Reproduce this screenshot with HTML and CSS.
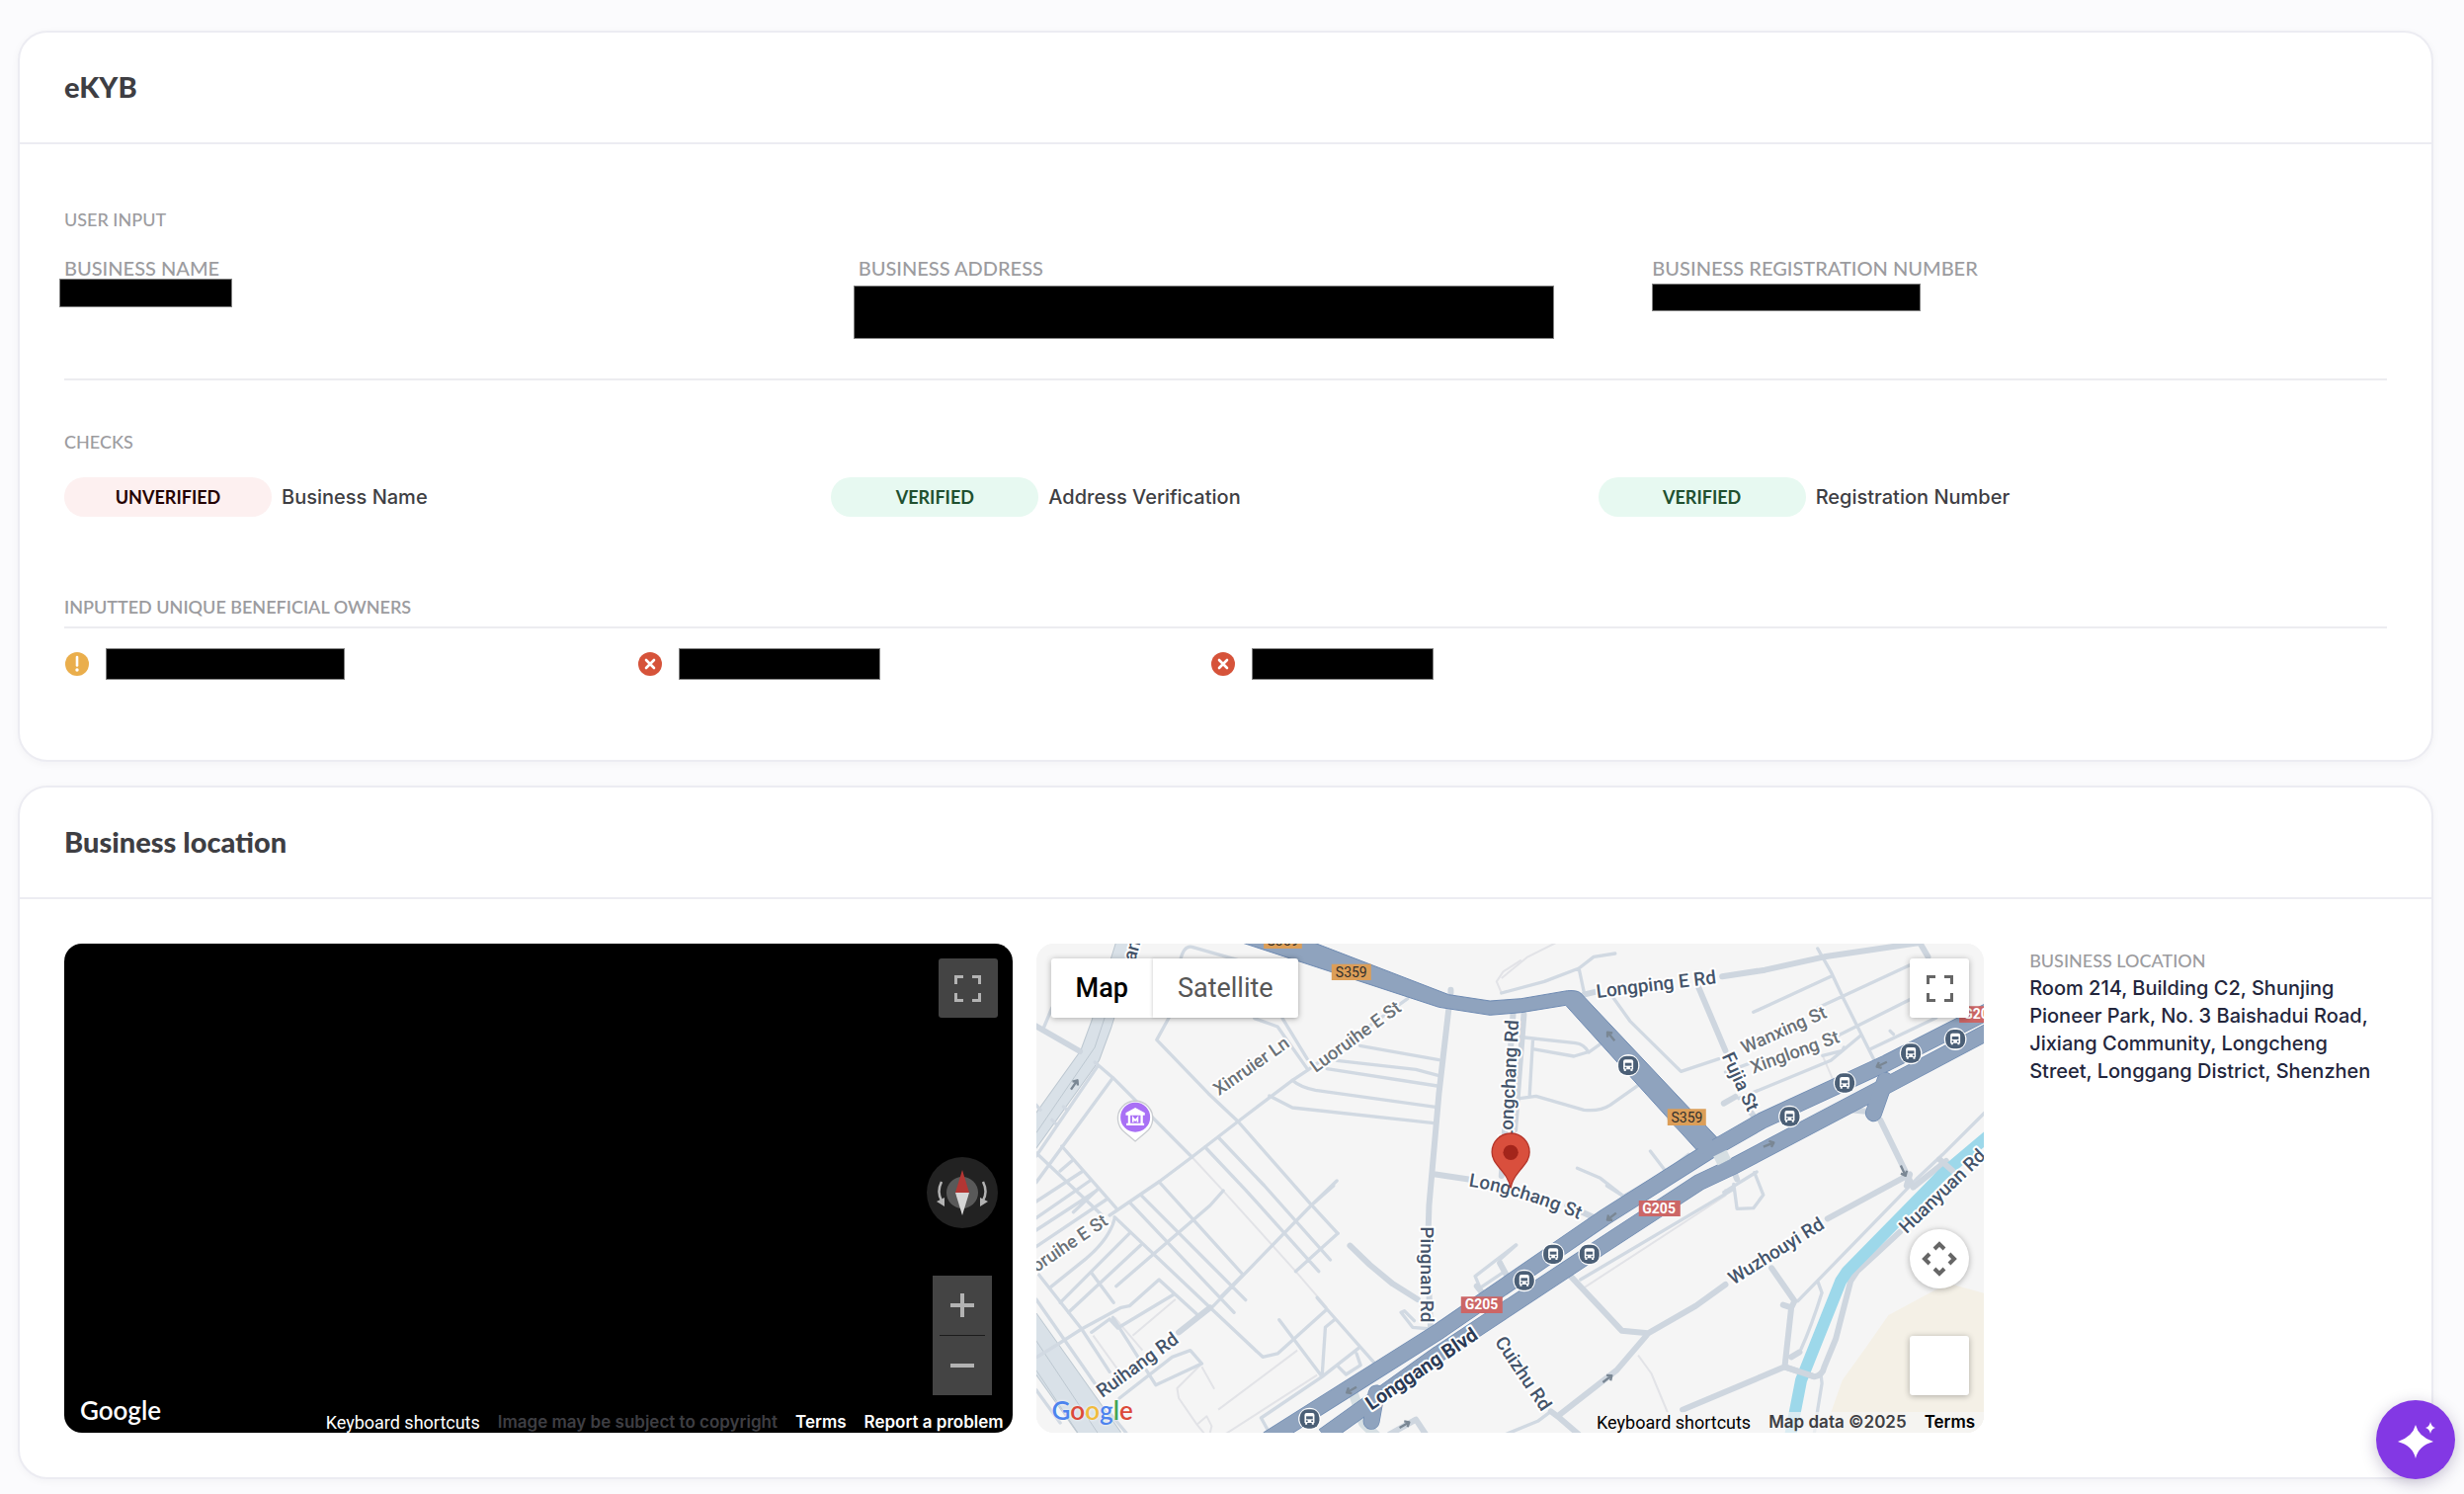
FILE: index.html
```html
<!DOCTYPE html>
<html lang="en">
<head>
<meta charset="utf-8">
<title>eKYB</title>
<link rel="stylesheet" href="styles.css">
</head>
<body>
<main class="page">
  <section class="card">
    <header class="card-header"><h2 class="card-title">eKYB</h2></header>
    <div class="card-body card-body-ekyb">
      <h3 class="label">USER INPUT</h3>
      <div class="fields">
        <div class="field">
          <span class="field-label">BUSINESS NAME</span>
          <span class="redacted redacted-name"></span>
        </div>
        <div class="field">
          <span class="field-label">BUSINESS ADDRESS</span>
          <span class="redacted redacted-address"></span>
        </div>
        <div class="field">
          <span class="field-label">BUSINESS REGISTRATION NUMBER</span>
          <span class="redacted redacted-number"></span>
        </div>
      </div>
      <h3 class="label">CHECKS</h3>
      <div class="checks">
        <div class="check"><span class="pill pill-bad">UNVERIFIED</span><span class="check-name">Business Name</span></div>
        <div class="check"><span class="pill pill-good">VERIFIED</span><span class="check-name">Address Verification</span></div>
        <div class="check"><span class="pill pill-good">VERIFIED</span><span class="check-name">Registration Number</span></div>
      </div>
      <h3 class="label label-ruled">INPUTTED UNIQUE BENEFICIAL OWNERS</h3>
      <div class="owners">
        <div class="owner">
          <svg class="status" viewBox="0 0 26 26" aria-label="Warning"><circle cx="13" cy="13" r="12" fill="#eaae4c"/><path d="M13 6v8.500" stroke="#fff" stroke-width="2.600" stroke-linecap="round"/><circle cx="13" cy="19" r="1.700" fill="#fff"/></svg>
          <span class="redacted owner-a"></span>
        </div>
        <div class="owner">
          <svg class="status" viewBox="0 0 26 26" aria-label="Failed"><circle cx="13" cy="13" r="12" fill="#d6533a"/><path d="M9 9l8 8M17 9l-8 8" stroke="#fff" stroke-width="2.600" stroke-linecap="round"/></svg>
          <span class="redacted owner-b"></span>
        </div>
        <div class="owner">
          <svg class="status" viewBox="0 0 26 26" aria-label="Failed"><circle cx="13" cy="13" r="12" fill="#d6533a"/><path d="M9 9l8 8M17 9l-8 8" stroke="#fff" stroke-width="2.600" stroke-linecap="round"/></svg>
          <span class="redacted owner-c"></span>
        </div>
      </div>
    </div>
  </section>

  <section class="card">
    <header class="card-header"><h2 class="card-title">Business location</h2></header>
    <div class="card-body location">
      <div class="view pano">
        <button class="ctl ctl-dark ctl-full" aria-label="Toggle fullscreen"><svg viewBox="0 0 27 27" width="27" height="27"><path d="M1.500 9V1.500H9M18 1.500h7.500V9M25.500 18v7.500H18M9 25.500H1.500V18" fill="none" stroke="#b3b3b3" stroke-width="3"/></svg></button>
        <button class="compass" aria-label="Rotate the view"><svg viewBox="0 0 72 72" width="72" height="72"><circle cx="36" cy="36" r="36" fill="#222"/><circle cx="36" cy="36" r="16" fill="#595959"/><path d="M36 13l7 23H29z" fill="#b33633"/><path d="M36 59l7-23H29z" fill="#d6d6d6"/><path d="M15 25q-5 10 0 19M57 25q5 10 0 19" fill="none" stroke="#b3b3b3" stroke-width="2.500"/><path d="M10 45l8-4v9zM62 45l-8-4v9z" fill="#b3b3b3"/></svg></button>
        <div class="zoom">
          <button class="ctl-zoom" aria-label="Zoom in"><svg viewBox="0 0 26 26" width="26" height="26"><path d="M13 1v24M1 13h24" stroke="#b3b3b3" stroke-width="4"/></svg></button>
          <hr class="zoom-rule">
          <button class="ctl-zoom" aria-label="Zoom out"><svg viewBox="0 0 26 26" width="26" height="26"><path d="M1 13h24" stroke="#b3b3b3" stroke-width="4"/></svg></button>
        </div>
        <span class="google google-white">Google</span>
        <div class="legal legal-pano">
          <button class="shortcut">Keyboard shortcuts</button>
          <span class="copyright">Image may be subject to copyright</span>
          <a href="#">Terms</a>
          <a href="#">Report a problem</a>
        </div>
      </div>

      <div class="view map">
        <svg class="map-art" viewBox="0 0 960 495" preserveAspectRatio="xMidYMid slice" aria-label="Street map of Longgang District">
          <defs>
            <g id="bus"><circle r="34" fill="#fff"/><rect x="-30" y="-29" width="60" height="58" rx="25" fill="#4b5f76"/><path d="M-15-12q0-6 6-6H9q6 0 6 6v24H-15z" fill="#fff"/><path d="M-10-8h20v9h-20z" fill="#4b5f76"/><circle cx="-8" cy="7" r="3" fill="#4b5f76"/><circle cx="8" cy="7" r="3" fill="#4b5f76"/><path d="M-13 10h6v7h-6zM7 10h6v7H7z" fill="#fff"/></g>
            <path id="arrow" d="M-18 0H12M4-10L16 0 4 10" fill="none" stroke="#7a8794" stroke-width="7"/>
            <path id="longchangSt" d="M1340 782Q1480 802 1700 892"/>
          </defs>
          <rect width="960" height="495" fill="#f5f5f5"/>
          <g transform="translate(-9 -15) scale(.33333)" fill="none" stroke-linejoin="round">
            <path fill="#f4f0e6" d="M2907 1107l-97-27-50 15-145 78-75 107-65 90-35 100-10 70h480z"/>
            <!-- expressway on the west side -->
            <g stroke="#bcc7d0" stroke-width="66"><path d="M315 0L225 290 190 385 0 650"/></g>
            <path d="M315 0L225 290 190 385 0 650" stroke="#d9e1e8" stroke-width="60"/>
            <path d="M245 240L205 360 27 620" stroke="#bcc7d0" stroke-width="3"/>
            <path d="M-30 1180L240 1560" stroke="#bcc7d0" stroke-width="112"/>
            <path d="M-30 1180L240 1560" stroke="#d9e1e8" stroke-width="106"/>
            <path d="M0 1210L220 1540M27 1340L160 1540" stroke="#bcc7d0" stroke-width="3"/>
            <!-- footpaths -->
            <g stroke="#e2e3e7" stroke-width="6">
              <path d="M500 693L590 790 815 1040 910 1150M450 1125L320 1235M200 1235L280 1345M265 1180L350 1280M530 1330L568 1397M530 1320L455 1395 460 1425 515 1505 545 1480 560 1510 555 1530M515 1505L560 1560M580 1460L820 1280M600 1535L880 1355"/>
              <path d="M1690 1090L2120 810 2120 790M1855 1295L1895 1350 1945 1470M2415 385L2445 455M1440 150L1520 85 1620 35"/>
              <path d="M1440 195L1425 160 1445 130 1500 95"/>
            </g>
            <!-- local streets -->
            <g stroke="#d1d9e2" stroke-width="10" stroke-linecap="round">
              <path d="M50 300L75 240M465 95Q475 50 500 55L640 95M690 272L760 297 850 425M775 272L850 395M430 270L393 337 550 500 640 585 860 835 943 925M1155 212L850 430 805 460 640 585 500 693 400 768 250 870"/>
              <path d="M1010 355L1250 398M940 400L1180 427 1250 446M910 425L1245 477M805 460Q830 482 875 490L1240 541M735 507L805 543 1235 590"/>
              <path d="M205 405L260 452 500 693M215 415L27 690M260 452L27 770M105 660L270 848M27 680L225 868M135 705L100 735M165 738L27 828M190 765L140 800 27 878M210 795L165 825 27 915M240 822L27 965M75 580L90 595M110 540L120 550M215 790L140 860M27 535L40 550"/>
              <path d="M540 663L663 793 885 1040M580 633L720 780 920 1005M400 768L655 1050M345 808L663 1127M310 830L628 1165M595 795L555 840 270 1085M940 765L862 840 560 1150M943 925L815 1040M930 780L862 840M655 1050L585 1120"/>
              <path d="M265 875L555 1150 715 1300 760 1290 910 1155 880 1120M910 1155L1060 1325M765 1187L895 1360 905 1210 935 1185M895 1360L710 1485 735 1530M895 1360L1010 1270M945 1330L968 1353 1012 1325 1000 1290M1070 1320L1165 1255"/>
              <path d="M265 880Q250 940 180 1000L68 1090M310 925L100 1135M345 960L125 1165M35 1050L165 1215M165 1215L285 1150 310 1145 400 1065 515 1170M195 1045L262 1135M165 1215L95 1260 30 1300M165 1215L250 1345M250 1185L275 1212 445 1110M195 1225L250 1185M27 1125L205 1380M27 1400L100 1500M260 1180L390 1385 530 1320 495 1280 440 1300 280 1425M250 1470L300 1530"/>
              <path d="M1360 1055L1483 960M1360 1055L1375 1090 1450 1040 1435 1005M1135 1165L1145 1160 1175 1190M1135 1165L1170 1210 1225 1215"/>
              <path d="M1440 195L1570 160 1675 120 1720 85 1785 75M1675 120L1690 190M1780 210L1830 280 1985 433 2100 395M2205 253L2440 145M2400 240L2680 110M2450 330L2700 205M2160 515L2440 400 2530 325M2120 435L2190 410M2560 365L2760 270M2400 60L2440 130 2480 215 2570 395M2415 385L2475 370 2480 360M2620 310L2630 320"/>
              <path d="M1510 330L1665 347Q1690 350 1705 375L1740 350M1535 365L1660 387 1700 375M1535 340L1525 510M1495 515L1545 508 1690 550Q1740 555 1770 535L1855 475M1670 727L1740 757 1810 812M1892 675L1940 738 1810 812M1940 738L2008 685M1680 1065L2145 790M2145 775L2155 850 2205 848 2235 808 2208 740"/>
              <path d="M2115 800L2215 738M1760 780L1815 815M1440 1000L1485 960M2915 550L2780 685 2700 760 2340 1130M2400 1070L2413 1105Q2380 1210 2350 1275M2410 1355L2413 1380 2400 1460 2390 1530M1440 1540L1550 1495 1590 1465M2890 1530L2970 1500"/>
            </g>
            <!-- collector roads -->
            <g stroke="#ced6df" stroke-width="18" stroke-linecap="round">
              <path d="M0 280L160 372M1280 240L1250 500 1220 840 1215 1000 1225 1215M1286 185v10M1235 745L1350 762M1475 260L1440 750M1508 260L1480 610M980 962L1040 1020 1110 1078 1185 1125M1365 1085L1385 1110M1435 1015L1460 1060M460 1225L555 1150"/>
              <path d="M1690 200L1730 190M2110 145L2240 125 2420 85 2710 42 2735 85M2035 170L2120 370M2195 555L2215 580M1640 840L1740 885M1650 1055L1735 1145 1805 1220 1885 1228M1885 1228L2030 1145 2120 1080M2430 880L2680 745 2670 780M2550 500L2555 530M2590 580L2690 785 2790 705M2260 1030L2330 1130 2320 1150 2300 1330 2390 1360Q2415 1355 2420 1330L2455 1245 2500 1070 2520 1040 2650 920M2295 1142L2320 1150M2300 1330L1990 1460M2320 1300L2345 1285"/>
              <path d="M1880 1235L1790 1340 1610 1480 1680 1540M1590 1465L1610 1480M2115 530L2150 510M2500 550L2555 555M1100 1535L1180 1490 1210 1535M2145 735L2155 760"/>
            </g>
            <!-- river -->
            <path d="M2940 610L2780 745 2490 1040 2470 1070 2350 1370 2315 1550" stroke="#9dd8ea" stroke-width="36"/>
            <path d="M2300 1330L2385 1358M2770 700L2810 735" stroke="#ced6df" stroke-width="18" stroke-linecap="round"/>
            <!-- trunk roads -->
            <path d="M990 1410L1020 1500 1060 1540" stroke="#d6dfe3" stroke-width="30"/>
            <g stroke-width="3" stroke="#6d8ab2" fill="#8fa3be">
              <path d="M640 38L860 38 1280 200 1405 219 1500 212 1640 188Q1670 186 1680 195L2100 640 2045 685 1635 232 1500 254 1405 262 1250 238z"/>
            </g>
            <g stroke="#6d8ab2" stroke-width="51">
              <path d="M2930 244L2610 407 2230 583 2075 672 1750 878 1250 1222 1000 1380 730 1550"/>
              <path d="M2930 306L2590 486 2150 718 2040 770 1740 966 1250 1290 900 1540"/>
              <path d="M2605 460L2570 560M1060 1410L1045 1495" stroke-linecap="round"/>
            </g>
            <g stroke="#8fa3be" stroke-width="47">
              <path d="M2930 244L2610 407 2230 583 2075 672 1750 878 1250 1222 1000 1380 730 1550"/>
              <path d="M2930 306L2590 486 2150 718 2040 770 1740 966 1250 1290 900 1540"/>
              <path d="M2605 460L2570 560M1060 1410L1045 1495" stroke-linecap="round"/>
              <path d="M1960 560L2070 665" stroke-width="50"/>
            </g>
            <path d="M2090 705L2130 685" stroke="#d6dfe3" stroke-width="30"/>
            <use href="#arrow" transform="translate(143 473) rotate(-55)"/>
            <use href="#arrow" transform="translate(1772 326) rotate(-130)"/>
            <use href="#arrow" transform="translate(2594 412) rotate(155)"/>
            <use href="#arrow" transform="translate(2252 655) rotate(-22)"/>
            <use href="#arrow" transform="translate(1774 874) rotate(142)"/>
            <use href="#arrow" transform="translate(2660 735) rotate(65)"/>
            <use href="#arrow" transform="translate(984 1400) rotate(150)"/>
            <use href="#arrow" transform="translate(1762 1366) rotate(-38)"/>
            <use href="#arrow" transform="translate(1146 1506) rotate(-30)"/>
          </g>
          <g transform="translate(-9 -15) scale(.33333)">
            <g class="shield">
              <path d="M718 10h116v50H718zM924 107h120v49H924zM1944 547h117v50h-117z" fill="#dc9e58"/>
              <text x="776" y="50">S359</text><text x="984" y="146">S359</text><text x="2003" y="587">S359</text>
            </g>
            <g class="shield shield-national">
              <path d="M1857 825h126v48h-126zM1317 1117h126v50h-126zM2830 235h126v50h-126z" fill="#cc6666"/>
              <text x="1918" y="864">G205</text><text x="1379" y="1156">G205</text><text x="2893" y="274">G205</text>
            </g>
            <use href="#bus" x="1825" y="415"/><use href="#bus" x="2315" y="570"/><use href="#bus" x="2482" y="468"/><use href="#bus" x="2683" y="378"/><use href="#bus" x="2818" y="335"/>
            <use href="#bus" x="1597" y="988"/><use href="#bus" x="1707" y="988"/><use href="#bus" x="1509" y="1068"/><use href="#bus" x="857" y="1488"/>
            <g class="street street-local">
              <text transform="translate(582 508) rotate(-35)">Xinruier Ln</text>
              <text transform="translate(876 438) rotate(-36)">Luoruihe E St</text>
              <text transform="translate(248 896) rotate(-34)" text-anchor="end">Luoruihe E St</text>
              <text transform="translate(2178 380) rotate(-24)">Wanxing St</text>
              <text transform="translate(2204 440) rotate(-20)">Xinglong St</text>
            </g>
            <g class="street">
              <text transform="translate(328 100) rotate(-75)">an</text>
              <text transform="translate(1492 278) rotate(-87)" text-anchor="end">Longchang Rd</text>
              <text><textPath href="#longchangSt">Longchang St</textPath></text>
              <text transform="translate(1730 210) rotate(-7)">Longping E Rd</text>
              <text transform="translate(2108 386) rotate(65)">Fujia St</text>
              <text transform="translate(1196 904) rotate(90)">Pingnan Rd</text>
              <text transform="translate(228 1425) rotate(-36)">Ruihang Rd</text>
              <text transform="translate(1418 1254) rotate(56)">Cuizhu Rd</text>
              <text transform="translate(2144 1082) rotate(-32)">Wuzhouyi Rd</text>
              <text transform="translate(2670 928) rotate(-44)">Huanyuan Rd</text>
              <text class="street-major" transform="translate(1045 1463) rotate(-34)">Longgang Blvd</text>
            </g>
            <path d="M328 645l-32-27a53 53 0 1 1 64 0z" fill="#fff" stroke="#c9ccd0" stroke-width="4"/>
            <circle cx="328" cy="572" r="45" fill="#a970f5"/>
            <path d="M328 543l29 16v7h-58v-7zM306 566h7v26h-7zM344 566h7v26h-7zM301 590h54v7h-54z" fill="#fff"/>
            <path d="M321 587v-13l7 8 7-8v13" fill="none" stroke="#fff" stroke-width="5"/>
            <path d="M1468 787c-5-30-18-40-30-56-16-20-27-32-27-53a57 57 0 0 1 114 0c0 21-11 33-27 53-12 16-25 26-30 56z" fill="#d94f3d" stroke="#b5352a" stroke-width="4"/>
            <circle cx="1468" cy="679" r="23" fill="#a3251b"/>
          </g>
        </svg>
        <div class="map-type">
          <button class="type-btn type-on">Map</button>
          <button class="type-btn">Satellite</button>
        </div>
        <button class="ctl ctl-light ctl-full" aria-label="Toggle fullscreen"><svg viewBox="0 0 27 27" width="27" height="27"><path d="M1.500 9V1.500H9M18 1.500h7.500V9M25.500 18v7.500H18M9 25.500H1.500V18" fill="none" stroke="#666" stroke-width="3"/></svg></button>
        <button class="ctl ctl-light ctl-pan" aria-label="Map camera controls"><svg viewBox="0 0 36 36" width="36" height="36"><path d="M13 8l5-5 5 5M13 28l5 5 5-5M8 13l-5 5 5 5M28 13l5 5-5 5" fill="none" stroke="#666" stroke-width="4"/></svg></button>
        <button class="ctl ctl-light ctl-pegman" aria-label="Street View"></button>
        <span class="google"><span class="g-blue">G</span><span class="g-red">o</span><span class="g-yellow">o</span><span class="g-blue">g</span><span class="g-green">l</span><span class="g-red">e</span></span>
        <div class="legal legal-map">
          <button class="shortcut">Keyboard shortcuts</button>
          <span class="copyright">Map data ©2025</span>
          <a href="#">Terms</a>
        </div>
      </div>

      <div class="address">
        <span class="label">BUSINESS LOCATION</span>
        <p class="address-text">Room 214, Building C2, Shunjing Pioneer Park, No. 3 Baishadui Road, Jixiang Community, Longcheng Street, Longgang District, Shenzhen</p>
      </div>
    </div>
  </section>
</main>
<button class="assistant" aria-label="Open assistant"><svg viewBox="0 0 40 40" width="40" height="40"><path d="M20 5q3 12 18 17-15 4-18 17-3-13-18-17Q17 17 20 5zM35 2q1 5 5 6-4 1-5 6-1-5-5-6 4-1 5-6z" fill="#fff"/></svg></button>
</body>
</html>
```
FILE: styles.css
```css
* { box-sizing: border-box; }
body {
  margin: 0;
  background: #fbfbfd;
  color: #3e3e43;
  font-family: "Lato", "Liberation Sans", sans-serif;
  font-size: 20px;
  line-height: 28px;
}
h2, h3, p { margin: 0; }
button { border: 0; padding: 0; background: none; font: inherit; cursor: pointer; }

.page { display: flex; flex-direction: column; gap: 24px; padding: 31px 31px 15px 18px; }
.card {
  background: #fff;
  border: 2px solid #ececf2;
  border-radius: 30px;
  box-shadow: 0 2px 8px rgba(30, 30, 60, .04);
}
.card-header { padding: 37px 45px 38px; border-bottom: 2px solid #ececf2; }
.card-title { font-size: 29px; line-height: 36px; font-weight: 900; }
.card-body { padding: 45px; }
.card-body-ekyb { padding: 62px 45px 81px; }

.label, .field-label { color: #9c9c9f; font-weight: 500; }
.label { display: block; font-size: 18px; line-height: 28px; }
.field-label { display: block; font-size: 20px; line-height: 28px; }

.fields {
  display: grid;
  grid-template-columns: repeat(3, 1fr);
  gap: 60px;
  align-items: start;
  margin: 21px 0 48px;
  min-height: 128px;
  border-bottom: 2px solid #ececf0;
}
.redacted { display: block; background: #000; border: 1px solid #808080; }
.redacted-name { width: 175px; height: 29px; margin: -3px 0 0 -5px; position: relative; }
.redacted-address { max-width: 709px; height: 54px; margin: 4px 0 0 -5px; }
.redacted-number { width: 272px; height: 28px; margin-top: 2px; }

.checks { display: grid; grid-template-columns: repeat(3, 1fr); padding-right: 22px; margin: 22px 0 77px; }
.check { display: flex; align-items: center; gap: 10px; }
.check-name { font-family: Inter, sans-serif; font-weight: 500; }
.pill { width: 210px; border-radius: 20px; font-size: 18px; line-height: 40px; font-weight: 700; text-align: center; }
.pill-bad { background: #fdf0f0; color: #240000; }
.pill-good { background: #e7f9f1; color: #20502f; }

.label-ruled { padding-bottom: 6px; border-bottom: 2px solid #ececf0; font-weight: 600; }
.owners { display: grid; grid-template-columns: repeat(4, 1fr); padding: 20px 32px 0 0; }
.owner { display: flex; align-items: center; gap: 16px; }
.status { width: 26px; height: 26px; }
.owner .redacted { height: 32px; }
.owner-a { width: 242px; }
.owner-b { width: 204px; }
.owner-c { width: 184px; }

.location { display: grid; grid-template-columns: 5fr 5fr 2fr; gap: 24px; }
.view { position: relative; height: 495px; border-radius: 18px; overflow: hidden; }
.pano { background: #000; }
.map { background: #f5f5f5; }
.map-art { display: block; width: 100%; height: 100%; }
.address { padding: 3px 0 0 22px; }
.address-text { color: #23263c; font-family: Inter, sans-serif; font-weight: 500; }

.ctl { position: absolute; right: 15px; width: 60px; height: 60px; border-radius: 3px; display: grid; place-items: center; }
.ctl-full { top: 15px; }
.ctl-dark { background: #444; }
.ctl-light { background: #fff; box-shadow: 0 1px 6px rgba(0, 0, 0, .3); }
.ctl-pan { bottom: 146px; border-radius: 50%; }
.ctl-pegman { bottom: 38px; }
.compass { position: absolute; right: 15px; top: 216px; width: 72px; height: 72px; }
.compass svg { display: block; }
.zoom { position: absolute; right: 21px; bottom: 38px; width: 60px; background: #444; }
.ctl-zoom { display: grid; place-items: center; width: 60px; height: 60px; }
.zoom-rule { margin: 0 7px; border: 0; height: 1px; background: #1c1c1c; }

.map-type { position: absolute; left: 15px; top: 15px; display: flex; border-radius: 3px; background: #fff; box-shadow: 0 1px 6px rgba(0, 0, 0, .3); }
.type-btn { height: 60px; padding: 0 25px; font-family: Roboto, sans-serif; font-size: 27px; color: #565656; }
.type-on { color: #000; font-weight: 500; }
.type-btn + .type-btn { box-shadow: -1px 0 3px rgba(0, 0, 0, .15); }

.google { position: absolute; left: 16px; bottom: 7px; font-family: Lato, sans-serif; font-size: 26px; line-height: 32px; font-weight: 600; color: #4d84ee; text-shadow: 0 0 3px #fff; }
.google-white { color: #fff; text-shadow: none; }
.g-red { color: #db4a3a; }
.g-yellow { color: #f0bb3c; }
.g-green { color: #45a555; }

.legal { position: absolute; right: 0; bottom: 0; display: flex; font-family: Inter, sans-serif; font-size: 17px; line-height: 21px; font-weight: 600; }
.legal > * { padding: 0 9px; }
.legal a { text-decoration: none; color: #000; }
.legal .shortcut { font-family: Roboto, sans-serif; font-size: 18px; font-weight: 400; line-height: 21px; }
.legal-map { background: rgba(245, 245, 245, .7); }
.legal-pano .shortcut, .legal-pano a { color: #fff; }
.legal-pano .copyright { color: #3e3e43; }

.street { font-family: Roboto, sans-serif; font-size: 57px; font-weight: 500; fill: #44546a; stroke: #fff; stroke-width: 12px; stroke-linejoin: round; paint-order: stroke; }
.street-local { font-size: 55px; fill: #6a7177; }
.street-major { font-size: 59px; font-weight: 700; fill: #2b3a55; }
.shield { font-family: Roboto, sans-serif; font-size: 42px; fill: #33302c; text-anchor: middle; }
.shield-national { fill: #fff; font-weight: 700; }

.assistant {
  position: fixed;
  right: 9px;
  bottom: 15px;
  width: 80px;
  height: 80px;
  border-radius: 50%;
  background: #8338e4;
  box-shadow: 0 4px 16px rgba(40, 20, 80, .25);
  display: grid;
  place-items: center;
}
```
